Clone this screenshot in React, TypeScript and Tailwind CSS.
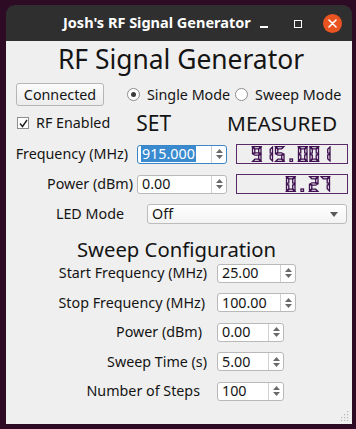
import React from 'react';

// seven segment map for the LCD readouts
const SEGS: Record<string, string> = {
  '0': 'abcdef',
  '1': 'bc',
  '2': 'abged',
  '3': 'abgcd',
  '4': 'fgbc',
  '5': 'afgcd',
  '6': 'afgedc',
  '7': 'abc',
  '8': 'abcdefg',
  '9': 'abcdfg',
};

function segPoly(s: string, w: number, h: number, t: number) {
  const m = h / 2;
  switch (s) {
    case 'a':
      return `0.5,0.5 ${w - 0.5},0.5 ${w - t},${t} ${t},${t}`;
    case 'd':
      return `0.5,${h - 0.5} ${w - 0.5},${h - 0.5} ${w - t},${h - t} ${t},${h - t}`;
    case 'f':
      return `0.5,1 ${t},${t + 0.5} ${t},${m - 1} 0.5,${m - 0.5}`;
    case 'e':
      return `0.5,${m + 0.5} ${t},${m + 1} ${t},${h - t - 0.5} 0.5,${h - 1}`;
    case 'b':
      return `${w - 0.5},1 ${w - t},${t + 0.5} ${w - t},${m - 1} ${w - 0.5},${m - 0.5}`;
    case 'c':
      return `${w - 0.5},${m + 0.5} ${w - t},${m + 1} ${w - t},${h - t - 0.5} ${w - 0.5},${h - 1}`;
    default:
      return `1,${m} ${t},${m - 1.2} ${w - t},${m - 1.2} ${w - 1},${m} ${w - t},${m + 1.2} ${t},${m + 1.2}`;
  }
}

function Lcd({ value }: { value: string }) {
  const cell = 11.5;
  const w = 9.5;
  const h = 16;
  const chars = value.split('');
  const total = chars.length * cell;
  return (
    <div
      className="w-[112px] h-[20px] border-[1.5px] border-[#5a2a68] flex items-center justify-end pr-[16px]"
      aria-label={value}
    >
      <svg width={total} height={h} viewBox={`0 0 ${total} ${h}`}>
        {chars.map((c, i) => (
          <g key={i} transform={`translate(${i * cell + 1},0)`}>
            {c === '.' ? (
              <rect x={3.5} y={h - 3} width={2.5} height={2.5} fill="none" stroke="#3f1150" strokeWidth={1.3} />
            ) : (
              (SEGS[c] || '').split('').map((s) => (
                <polygon key={s} points={segPoly(s, w, h, 2.8)} fill="none" stroke="#3f1150" strokeWidth={1.3} />
              ))
            )}
          </g>
        ))}
      </svg>
    </div>
  );
}

function SpinBox({ value, width, focused }: { value: string; width: string; focused?: boolean }) {
  return (
    <div
      className={`${width} h-[19px] bg-white rounded-[3px] border flex items-stretch ${
        focused ? 'border-[#3b86c6]' : 'border-[#b9b9b9]'
      }`}
    >
      <div className="flex-1 flex items-center pl-[3px] overflow-hidden">
        {focused ? (
          <span className="bg-[#3a8ad0] text-white leading-[16px] px-[1px]">{value}</span>
        ) : (
          <span className="leading-[16px] px-[1px]">{value}</span>
        )}
      </div>
      <div className="w-[15px] border-l border-[#d0d0d0] flex flex-col items-center justify-center gap-[2px]">
        <svg width="7" height="4" viewBox="0 0 7 4">
          <polygon points="0,4 3.5,0 7,4" fill="#6a6a6a" />
        </svg>
        <svg width="7" height="4" viewBox="0 0 7 4">
          <polygon points="0,0 7,0 3.5,4" fill="#6a6a6a" />
        </svg>
      </div>
    </div>
  );
}

function Radio({ checked, label }: { checked?: boolean; label: string }) {
  return (
    <div className="flex items-center gap-[7px]">
      <div className="w-[13px] h-[13px] rounded-full border border-[#8d8d8d] bg-white flex items-center justify-center">
        {checked && <div className="w-[5px] h-[5px] rounded-full bg-[#3c3c3c]" />}
      </div>
      <span>{label}</span>
    </div>
  );
}

export default function App() {
  return (
    <div className="w-[356px] h-[429px] bg-[#2e0b24] pt-[5px] pl-[6px] overflow-hidden font-['Noto_Sans',sans-serif] text-[14.3px] text-[#141414]">
      <div className="w-[346px]">
        {/* title bar */}
        <div className="h-[36px] bg-[#2f2f2f] rounded-t-[9px] flex items-center">
          <div className="ml-[57px] text-white font-bold text-[14.5px]">Josh's RF Signal Generator</div>
          <div className="ml-auto flex items-center mr-[10px]">
            <div className="w-[8px] h-[1.5px] bg-white mt-[8px]" />
            <div className="w-[8px] h-[8px] border-[1.5px] border-white ml-[26px] mt-[1px]" />
            <div className="w-[19px] h-[19px] rounded-full bg-[#e95420] ml-[21px] flex items-center justify-center">
              <svg width="9" height="9" viewBox="0 0 9 9">
                <path d="M1 1 L8 8 M8 1 L1 8" stroke="white" strokeWidth="1.6" strokeLinecap="round" />
              </svg>
            </div>
          </div>
        </div>

        {/* content */}
        <div className="h-[383px] bg-[#efefef] flex flex-col relative">
          <div className="h-[36px] flex items-center justify-center text-[26.4px] leading-[30px] pl-[4px]">RF Signal Generator</div>

          <div className="mt-[6px] flex items-center h-[23px]">
            <button className="ml-[10px] w-[88px] h-[23px] rounded-[3px] border border-[#b6b6b6] bg-gradient-to-b from-[#fbfbfb] to-[#ececec]">
              Connected
            </button>
            <div className="ml-[23px] flex items-center gap-[5px]">
              <Radio checked label="Single Mode" />
              <Radio label="Sweep Mode" />
            </div>
          </div>

          <div className="mt-[8px] flex items-center h-[18px]">
            <div className="ml-[11px] w-[12px] h-[12px] border border-[#8d8d8d] bg-white flex items-center justify-center">
              <svg width="9" height="9" viewBox="0 0 9 9">
                <path d="M1 4.5 L3.5 7.5 L8 1" stroke="#202020" strokeWidth="1.4" fill="none" />
              </svg>
            </div>
            <span className="ml-[7px]">RF Enabled</span>
            <span className="ml-[26px] text-[21px] leading-[20px]">SET</span>
            <span className="ml-[56px] text-[20.8px] leading-[20px]">MEASURED</span>
          </div>

          <div className="mt-[12px] flex items-center h-[20px]">
            <div className="w-[122px] text-right">Frequency (MHz)</div>
            <div className="ml-[9px]">
              <SpinBox value="915.000" width="w-[90px]" focused />
            </div>
            <div className="ml-[9px]">
              <Lcd value="915.001" />
            </div>
          </div>

          <div className="mt-[10px] flex items-center h-[20px]">
            <div className="w-[127px] text-right">Power (dBm)</div>
            <div className="ml-[4px]">
              <SpinBox value="0.00" width="w-[90px]" />
            </div>
            <div className="ml-[9px]">
              <Lcd value="0.27" />
            </div>
          </div>

          <div className="mt-[10px] flex items-center h-[20px]">
            <div className="w-[118px] text-right">LED Mode</div>
            <div className="ml-[23px] w-[200px] h-[20px] rounded-[3px] border border-[#bcbcbc] bg-gradient-to-b from-[#ffffff] to-[#f3f3f3] flex items-center pl-[4px] pr-[8px]">
              <span>Off</span>
              <svg className="ml-auto" width="8" height="5" viewBox="0 0 8 5">
                <polygon points="0,0 8,0 4,5" fill="#5a5a5a" />
              </svg>
            </div>
          </div>

          <div className="mt-[13px] h-[24px] flex items-center justify-center text-[20.3px] leading-[24px] pr-[5px]">Sweep Configuration</div>

          <div className="mt-[3px] flex flex-col gap-[11.5px]">
            <div className="flex items-center h-[18px]">
              <div className="w-[201px] text-right">Start Frequency (MHz)</div>
              <div className="ml-[10px]"><SpinBox value="25.00" width="w-[79px]" /></div>
            </div>
            <div className="flex items-center h-[18px]">
              <div className="w-[199px] text-right">Stop Frequency (MHz)</div>
              <div className="ml-[12px]"><SpinBox value="100.00" width="w-[79px]" /></div>
            </div>
            <div className="flex items-center h-[18px]">
              <div className="w-[196px] text-right">Power (dBm)</div>
              <div className="ml-[15px]"><SpinBox value="0.00" width="w-[67px]" /></div>
            </div>
            <div className="flex items-center h-[18px]">
              <div className="w-[201px] text-right">Sweep Time (s)</div>
              <div className="ml-[10px]"><SpinBox value="5.00" width="w-[67px]" /></div>
            </div>
            <div className="flex items-center h-[18px]">
              <div className="w-[194px] text-right">Number of Steps</div>
              <div className="ml-[17px]"><SpinBox value="100" width="w-[67px]" /></div>
            </div>
          </div>

          {/* size grip */}
          <svg className="absolute right-[3px] bottom-[3px]" width="10" height="10" viewBox="0 0 10 10">
            {[
              [8, 0], [8, 3], [5, 3], [8, 6], [5, 6], [2, 6], [8, 9], [5, 9], [2, 9], [-1, 9],
            ].map(([x, y], i) => (
              <rect key={i} x={x} y={y} width="1.2" height="1.2" fill="#b4b4b4" />
            ))}
          </svg>
        </div>
      </div>
    </div>
  );
}
